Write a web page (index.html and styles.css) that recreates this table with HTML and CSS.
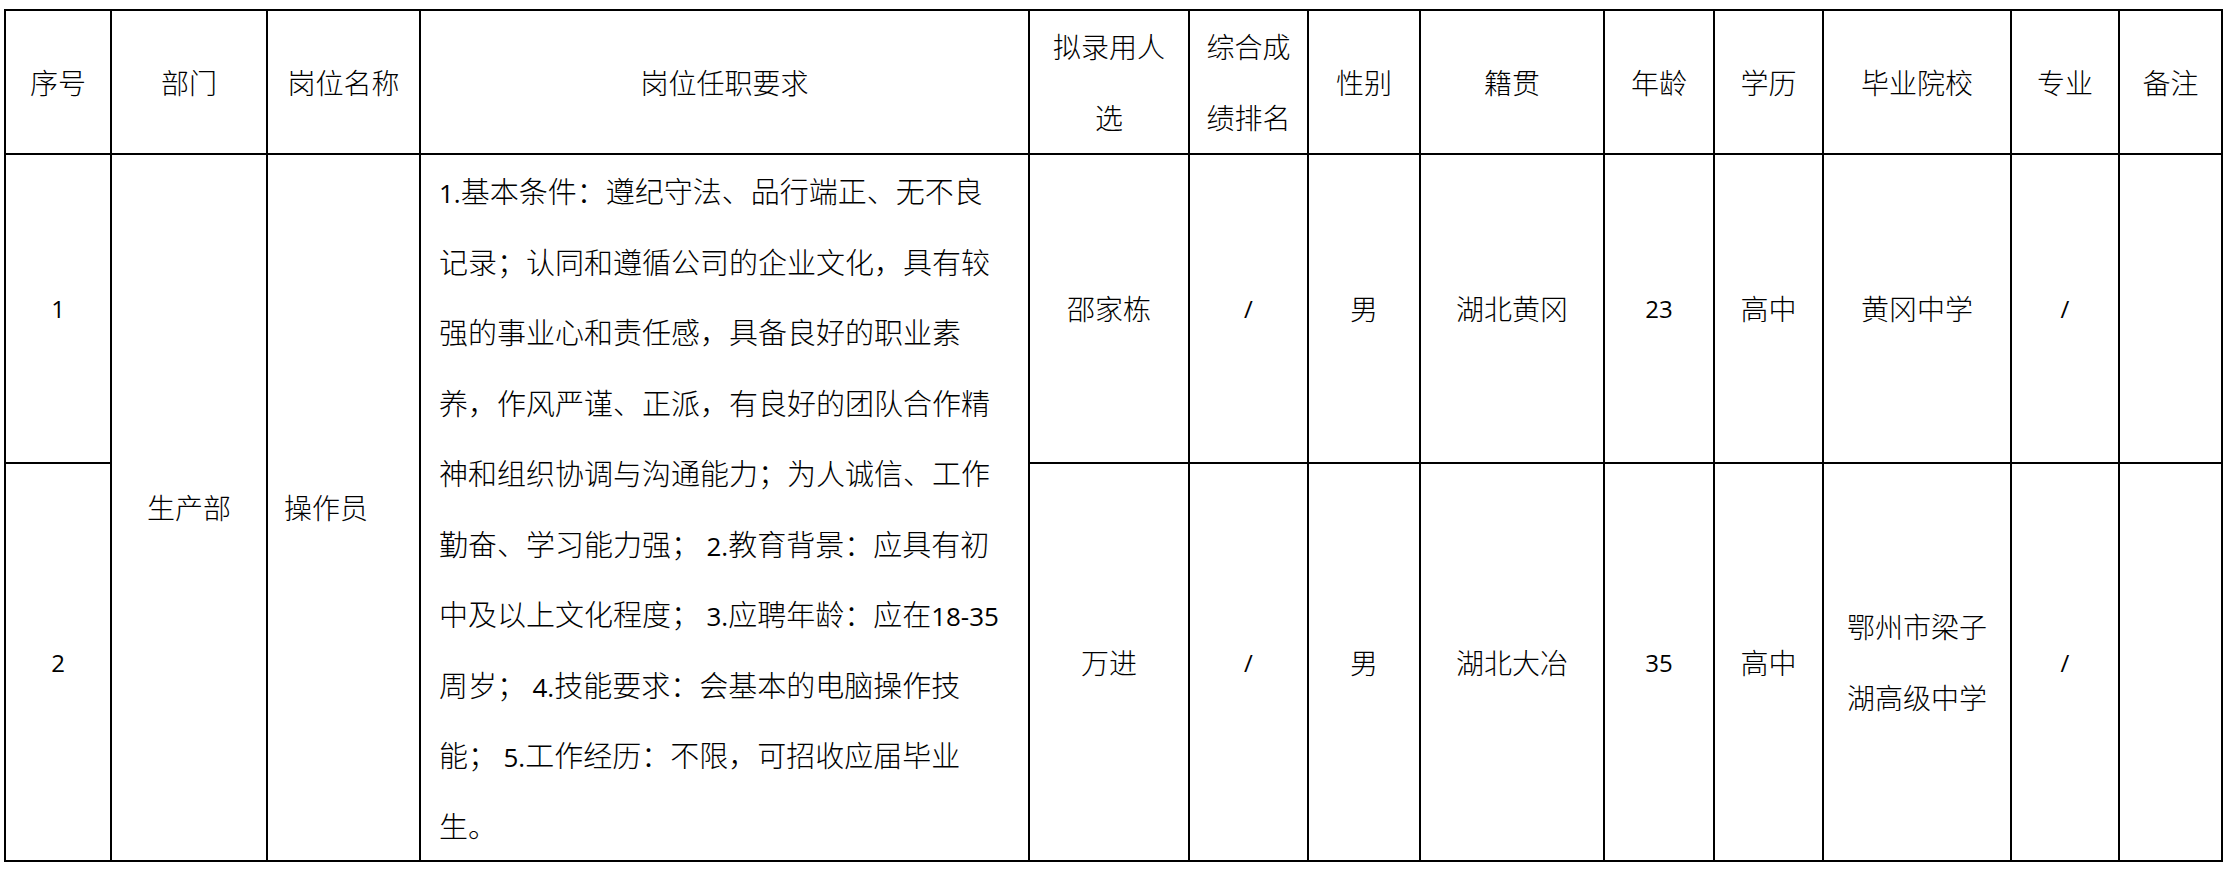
FILE: index.html
```html
<!DOCTYPE html>
<html lang="zh-CN">
<head>
<meta charset="utf-8">
<title>拟录用人员名单</title>
<link rel="stylesheet" href="styles.css">
</head>
<body>
<div class="page">
  <table class="roster">
    <colgroup>
      <col class="w-no">
      <col class="w-dept">
      <col class="w-post">
      <col class="w-req">
      <col class="w-cand">
      <col class="w-rank">
      <col class="w-sex">
      <col class="w-home">
      <col class="w-age">
      <col class="w-edu">
      <col class="w-school">
      <col class="w-major">
      <col class="w-note">
    </colgroup>
    <thead>
      <tr class="row-head">
        <th>序号</th>
        <th>部门</th>
        <th>岗位名称</th>
        <th>岗位任职要求</th>
        <th>拟录用人<br>选</th>
        <th>综合成<br>绩排名</th>
        <th>性别</th>
        <th>籍贯</th>
        <th>年龄</th>
        <th>学历</th>
        <th>毕业院校</th>
        <th>专业</th>
        <th>备注</th>
      </tr>
    </thead>
    <tbody>
      <tr class="row-a">
        <td class="num">1</td>
        <td rowspan="2">生产部</td>
        <td rowspan="2" class="left">操作员</td>
        <td rowspan="2" class="req"><span class="lat">1.</span>基本条件：遵纪守法、品行端正、无不良<br>记录；认同和遵循公司的企业文化，具有较<br>强的事业心和责任感，具备良好的职业素<br>养，作风严谨、正派，有良好的团队合作精<br>神和组织协调与沟通能力；为人诚信、工作<br>勤奋、学习能力强； <span class="lat">2.</span>教育背景：应具有初<br>中及以上文化程度； <span class="lat">3.</span>应聘年龄：应在<span class="lat">18-35</span><br>周岁； <span class="lat">4.</span>技能要求：会基本的电脑操作技<br>能； <span class="lat">5.</span>工作经历：不限，可招收应届毕业<br>生。</td>
        <td>邵家栋</td>
        <td class="num">/</td>
        <td>男</td>
        <td>湖北黄冈</td>
        <td class="num">23</td>
        <td>高中</td>
        <td>黄冈中学</td>
        <td class="num">/</td>
        <td></td>
      </tr>
      <tr class="row-b">
        <td class="num">2</td>
        <td>万进</td>
        <td class="num">/</td>
        <td>男</td>
        <td>湖北大冶</td>
        <td class="num">35</td>
        <td>高中</td>
        <td>鄂州市梁子<br>湖高级中学</td>
        <td class="num">/</td>
        <td></td>
      </tr>
    </tbody>
  </table>
</div>
</body>
</html>
```

FILE: styles.css
```css
html, body {
  margin: 0;
  padding: 0;
  background: #ffffff;
}

.page {
  padding: 9px 0 0 4px;
}

.roster {
  border-collapse: collapse;
  table-layout: fixed;
  width: 2219px;
  color: #000;
  font-family: "Noto Sans CJK SC", "Noto Sans", sans-serif;
  font-weight: 300;
  font-size: 28px;
}

.w-no { width: 106px; }
.w-dept { width: 156px; }
.w-post { width: 153px; }
.w-req { width: 609px; }
.w-cand { width: 160px; }
.w-rank { width: 119px; }
.w-sex { width: 112px; }
.w-home { width: 184px; }
.w-age { width: 110px; }
.w-edu { width: 109px; }
.w-school { width: 188px; }
.w-major { width: 108px; }
.w-note { width: 103px; }

.roster th,
.roster td {
  border: 2px solid #000;
  padding: 0 4px;
  text-align: center;
  vertical-align: middle;
  line-height: 71px;
  font-weight: 300;
  white-space: nowrap;
}

.row-head { height: 143px; }
.row-a { height: 309px; }
.row-b { height: 398px; }

.roster td.left {
  text-align: left;
  padding-left: 16px;
}

.roster td.num {
  font-family: "Open Sans", "Noto Sans CJK SC", sans-serif;
  font-weight: 400;
  font-size: 24px;
}

.roster td.req {
  text-align: left;
  padding: 0 10px 0 18px;
  font-family: "Noto Sans CJK SC", sans-serif;
  font-size: 29px;
  line-height: 70.5px;
}

.lat {
  font-family: "Open Sans", sans-serif;
  font-weight: 400;
  font-size: 26px;
  line-height: 1;
}
```
